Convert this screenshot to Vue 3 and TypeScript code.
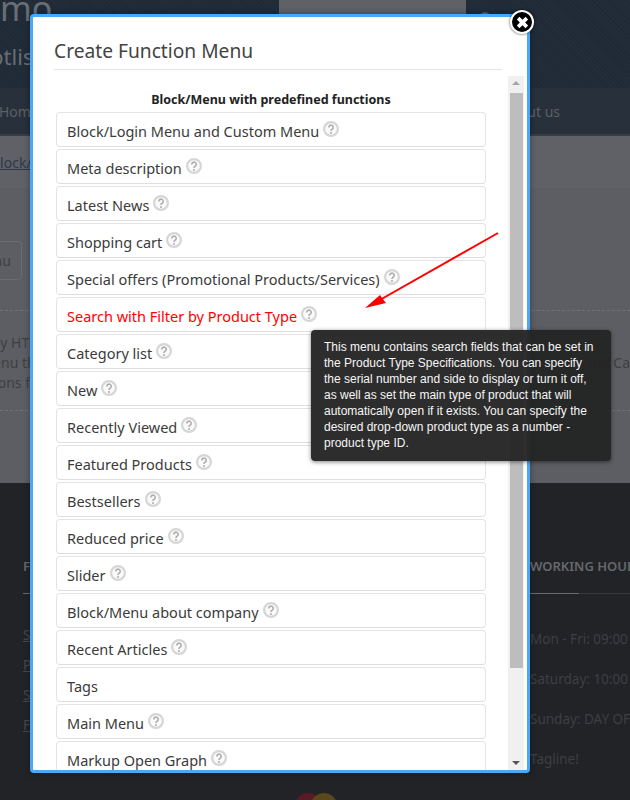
<script setup lang="ts">
interface MenuItem { label: string; help: boolean; active?: boolean }
const items: MenuItem[] = [
  { label: 'Block/Login Menu and Custom Menu', help: true },
  { label: 'Meta description', help: true },
  { label: 'Latest News', help: true },
  { label: 'Shopping cart', help: true },
  { label: 'Special offers (Promotional Products/Services)', help: true },
  { label: 'Search with Filter by Product Type', help: true, active: true },
  { label: 'Category list', help: true },
  { label: 'New', help: true },
  { label: 'Recently Viewed', help: true },
  { label: 'Featured Products', help: true },
  { label: 'Bestsellers', help: true },
  { label: 'Reduced price', help: true },
  { label: 'Slider', help: true },
  { label: 'Block/Menu about company', help: true },
  { label: 'Recent Articles', help: true },
  { label: 'Tags', help: false },
  { label: 'Main Menu', help: true },
  { label: 'Markup Open Graph', help: true },
]
</script>

<template>
  <div class="page">
    <header class="site-head">
      <div class="brand">
        <div class="logo">Demo</div>
        <div class="slogan">Hotlist</div>
      </div>
      <div class="head-box"></div>
      <div class="head-dot"></div>
    </header>
    <nav class="site-nav">
      <span class="nav-home">Home</span>
      <span class="nav-about">About us</span>
    </nav>
    <div class="crumbs"><a class="crumb">Block/Menu</a></div>
    <main class="content">
      <div class="tabs"><span class="tab">Menu</span></div>
      <div class="desc">
        <div class="desc-left">
          <p>by HTML</p>
          <p>menu th</p>
          <p>options f</p>
        </div>
        <p class="desc-right">o the Ca</p>
      </div>
    </main>
    <footer class="site-foot">
      <div class="foot-left">
        <h4>F</h4>
        <div class="foot-rule short"></div>
        <a>S</a><a>P</a><a>S</a><a>F</a>
      </div>
      <div class="foot-right">
        <h4>WORKING HOURS</h4>
        <div class="foot-rule"><i></i></div>
        <p>Mon - Fri: 09:00 - 18:00</p>
        <p>Saturday: 10:00 - 16:00</p>
        <p>Sunday: DAY OFF</p>
        <p>Tagline!</p>
      </div>
      <div class="cards"><span class="card-red"></span><span class="card-yellow"></span></div>
    </footer>

    <div class="modal">
      <h2 class="modal-title">Create Function Menu</h2>
      <div class="modal-body">
        <div class="list">
          <div class="list-head">Block/Menu with predefined functions</div>
          <div v-for="item in items" :key="item.label" class="item" :class="{ active: item.active }">
            <span>{{ item.label }}</span>
            <svg v-if="item.help" class="help" viewBox="0 0 16 16" width="16" height="16">
              <circle cx="8" cy="8" r="6.9" fill="#fafafa" stroke="#d6d6d6" stroke-width="2.2" />
              <path d="M5.8 6.4a2.2 2.2 0 1 1 3.4 1.8c-.8.5-1.2.9-1.2 1.7" fill="none" stroke="#adadad" stroke-width="1.6" />
              <circle cx="8" cy="11.9" r="1" fill="#adadad" />
            </svg>
          </div>
        </div>
        <div class="scrollbar">
          <span class="arrow up"></span>
          <span class="thumb"></span>
          <span class="arrow down"></span>
        </div>
      </div>
      <button class="close" aria-label="Close">
        <svg viewBox="0 0 12 12" width="13" height="13"><path d="M2 2l8 8M10 2l-8 8" stroke="#fff" stroke-width="3.4" /></svg>
      </button>
    </div>

    <svg class="pointer" viewBox="0 0 140 80" width="140" height="80">
      <path d="M135 1L15 69" stroke="#f00" stroke-width="2" fill="none" />
      <path d="M2 76L17 63L19 66L23 71Z" fill="#f00" />
    </svg>

    <div class="tooltip">This menu contains search fields that can be set in the Product Type Specifications. You can specify the serial number and side to display or turn it off, as well as set the main type of product that will automatically open if it exists. You can specify the desired drop-down product type as a number - product type ID.</div>
  </div>
</template>

<style>
html, body { margin: 0; padding: 0; background: #212327; }
</style>

<style scoped>
.page {
  position: relative;
  width: 630px;
  height: 800px;
  overflow: hidden;
  font-family: "Noto Sans", "Open Sans", sans-serif;
  background: #212327;
}
.site-head {
  display: flex;
  height: 88px;
  background-color: #222d39;
  background-image: repeating-linear-gradient(45deg, rgba(0, 0, 0, .08) 0 1px, transparent 1px 3px);
  color: #686e74;
}
.brand { width: 279px; overflow: hidden; }
.logo { font-size: 34px; line-height: 30px; margin: -7px 0 0 -44px; white-space: nowrap; }
.slogan { font-size: 22px; line-height: 30px; margin: 18px 0 0 -26px; white-space: nowrap; }
.head-box { width: 187px; height: 14px; background: #606166; }
.head-dot { width: 12px; height: 12px; margin: 12px 0 0 13px; border-radius: 50%; background: #5c6166; }
.site-nav {
  display: flex;
  justify-content: space-between;
  height: 48px;
  box-sizing: border-box;
  border-bottom: 2px solid #3a3d42;
  background: #27303b;
  color: #5c6167;
  font-size: 14px;
  line-height: 48px;
  padding-right: 70px;
}
.nav-home { margin-left: -1px; }
.crumbs {
  height: 52px;
  background: #606166;
  box-sizing: border-box;
  padding-top: 18px;
  font-size: 14px;
  line-height: 18px;
}
.crumb { margin-left: -9px; color: #2b3a4b; text-decoration: underline; }
.content { height: 295px; background: #5d5e63; color: #3d3e42; font-size: 14px; }
.tabs { height: 123px; box-sizing: border-box; padding-top: 53px; border-bottom: 1px dashed #707176; }
.tab {
  display: block;
  width: 68px;
  height: 39px;
  margin-left: -46px;
  box-sizing: border-box;
  padding: 10px 0 0 18px;
  border: 1px solid #6a6b70;
  border-radius: 4px;
  line-height: 18px;
}
.desc {
  display: flex;
  justify-content: space-between;
  height: 100px;
  box-sizing: border-box;
  border-bottom: 1px dashed #707176;
  padding-top: 22px;
  line-height: 20px;
}
.desc p { margin: 0; white-space: nowrap; }
.desc-left p:nth-child(1) { margin-left: -8px; }
.desc-left p:nth-child(2) { margin-left: -20px; }
.desc-left p:nth-child(3) { margin-left: -28px; }
.desc-right { margin-top: 20px !important; }
.site-foot {
  position: relative;
  display: flex;
  justify-content: space-between;
  height: 317px;
  box-sizing: border-box;
  padding-top: 73px;
  color: #46484c;
  font-size: 13.5px;
}
.site-foot h4 {
  margin: 0;
  height: 37px;
  font-size: 13px;
  font-weight: 600;
  line-height: 20px;
  color: #66686c;
  white-space: nowrap;
}
.foot-left { width: 30px; margin-left: 23px; overflow: hidden; }
.foot-left a { display: block; height: 30px; line-height: 20px; text-decoration: underline; }
.foot-left a:first-of-type { margin-top: -4px; }
.foot-rule { height: 1px; background: #35373b; margin-bottom: 35px; }
.foot-rule.short { background: #6a6c70; }
.foot-rule i { display: block; width: 49px; height: 1px; background: #6a6c70; }
.foot-right { width: 100px; overflow: hidden; }
.foot-right p { margin: 0; height: 40px; line-height: 20px; white-space: nowrap; color: #3d3f43; }
.cards { position: absolute; left: 295px; top: 310px; display: flex; }
.cards span { width: 26px; height: 26px; border-radius: 50%; }
.card-red { background: #5a1a28; }
.card-yellow { margin-left: -10px; background: #5e4d1c; opacity: .9; }

.modal {
  position: absolute;
  left: 30px;
  top: 14px;
  width: 500px;
  height: 759px;
  box-sizing: border-box;
  display: flex;
  flex-direction: column;
  padding: 0 3px 0 21px;
  background: #fff;
  border: 3px solid #4aa8f8;
  border-radius: 4px;
  box-shadow: 0 0 6px rgba(0, 0, 0, .35);
}
.modal-title {
  margin: 0 22px 0 0;
  height: 53px;
  box-sizing: border-box;
  padding-top: 21px;
  border-bottom: 1px solid #e5e5e5;
  font-size: 19.2px;
  font-weight: 400;
  line-height: 26px;
  color: #444;
  flex: none;
}
.modal-body { display: flex; flex: 1; min-height: 0; padding-top: 6px; overflow: hidden; }
.list { width: 432px; margin-left: 2px; flex: none; overflow: hidden; }
.list-head {
  height: 36px;
  box-sizing: border-box;
  padding-top: 15px;
  font-size: 12.5px;
  font-weight: 700;
  line-height: 18px;
  text-align: center;
  color: #222;
  white-space: nowrap;
  width: 430px;
}
.item {
  display: flex;
  align-items: flex-start;
  gap: 4px;
  width: 430px;
  height: 35px;
  box-sizing: border-box;
  margin-bottom: 2px;
  padding: 8px 0 0 10px;
  border: 1px solid #e4e4e4;
  border-bottom-color: #dedede;
  border-radius: 4px;
  font-size: 14.5px;
  line-height: 21px;
  color: #3b3b3b;
  white-space: nowrap;
}
.item.active { color: #f00; }
.help { flex: none; margin-top: 0; }
.scrollbar {
  width: 16px;
  margin-left: 20px;
  flex: none;
  display: flex;
  flex-direction: column;
  align-items: center;
  background: #f0f0f0;
}
.arrow { width: 0; height: 0; border: 4px solid transparent; flex: none; }
.arrow.up { margin-top: 5px; border-top-width: 0; border-bottom: 4px solid #a5a5a5; }
.arrow.down { margin-top: auto; margin-bottom: 5px; border-bottom-width: 0; border-top: 4px solid #555; }
.thumb { width: 13px; height: 575px; margin-top: 8px; margin-left: 1px; background: #bdbdbd; flex: none; }
.close {
  position: absolute;
  left: 477px;
  top: -7px;
  width: 24px;
  height: 24px;
  padding: 0;
  display: flex;
  align-items: center;
  justify-content: center;
  background: #000;
  border: 2px solid #fff;
  border-radius: 50%;
  box-shadow: 0 0 3px rgba(0, 0, 0, .7);
  box-sizing: border-box;
}
.pointer { position: absolute; left: 363px; top: 232px; }
.tooltip {
  position: absolute;
  left: 311px;
  top: 330px;
  width: 300px;
  height: 131px;
  box-sizing: border-box;
  padding: 9px 13px;
  border-radius: 4px;
  background: rgba(36, 36, 36, .96);
  box-shadow: 0 1px 4px rgba(0, 0, 0, .5);
  color: #f6f6f6;
  font-family: "Liberation Sans", Arial, sans-serif;
  font-size: 12px;
  line-height: 16px;
}
</style>
